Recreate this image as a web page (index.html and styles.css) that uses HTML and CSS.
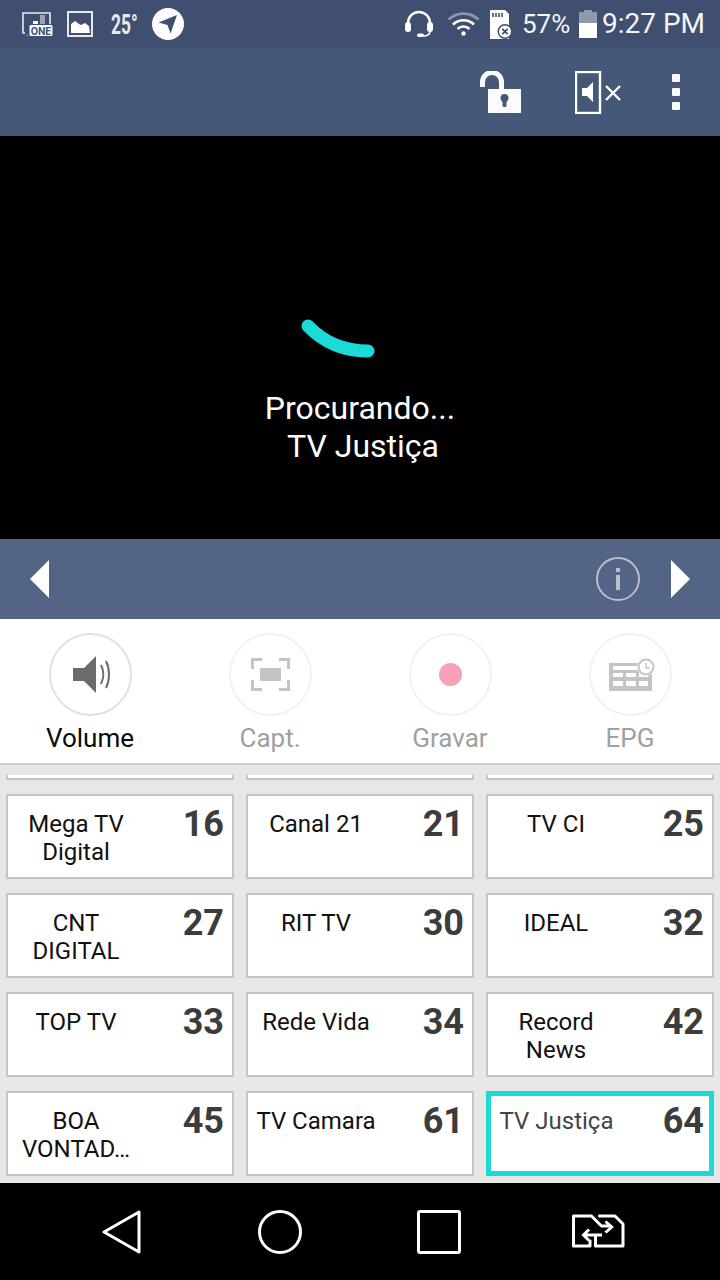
FILE: index.html
```html
<!DOCTYPE html>
<html lang="pt">
<head>
<meta charset="utf-8">
<title>TV</title>
<link rel="stylesheet" href="styles.css">
</head>
<body>
<div class="app">
  <header class="status">
    <div class="status-left">
      <svg class="ic-one" viewBox="0 0 31 24"><path d="M1 19V1h27v11" fill="none" stroke="#e8eaee" stroke-width="1.6"/><rect x="11" y="9" width="5" height="3" fill="#fff"/><rect x="18" y="3" width="5" height="9" fill="#9aa3b5"/><path d="M1 19v2h2M5 24h1" stroke="#e8eaee" stroke-width="1.4" fill="none"/><rect x="7.500" y="13" width="23" height="11" rx="1.500" fill="#fff"/><text x="19" y="22.500" class="one-text">ONE</text></svg>
      <svg class="ic-pic" viewBox="0 0 26 26"><rect x="1" y="1" width="24" height="24" fill="none" stroke="#e6e8ec" stroke-width="2"/><path d="M4 22v-9l4-3 4 3 2 1 4-2 4 3 1 7z" fill="#fff"/></svg>
      <span class="temp">25°</span>
      <svg class="ic-nav" viewBox="0 0 32 32"><circle cx="16" cy="16" r="16" fill="#fff"/><path d="M6.500 14.500 25 7 18.500 25.500 15.500 17z" fill="#404f6f"/></svg>
    </div>
    <div class="status-right">
      <svg class="ic-head" viewBox="0 0 30 28"><path d="M4 15V13a11 11 0 0 1 22 0v2" fill="none" stroke="#fff" stroke-width="2.400"/><rect x="1" y="12" width="6" height="10" rx="3" fill="#fff"/><rect x="23" y="12" width="6" height="10" rx="3" fill="#fff"/><path d="M26 21c0 4-4 5-7 5" fill="none" stroke="#fff" stroke-width="1.600"/><rect x="13" y="23.500" width="7" height="3.500" rx="1.700" fill="#fff"/></svg>
      <svg class="ic-wifi" viewBox="0 0 33 24"><path d="M1.500 7.500a22 22 0 0 1 30 0" fill="none" stroke="#8d97ac" stroke-width="2.600"/><path d="M6 12.500a15 15 0 0 1 21 0M10.500 17a8.500 8.500 0 0 1 12 0" fill="none" stroke="#fff" stroke-width="2.600"/><circle cx="16.500" cy="21.500" r="2.200" fill="#fff"/></svg>
      <svg class="ic-sd" viewBox="0 0 23 29"><path d="M0 0h15l4 4v25H0z" fill="#fff"/><path d="M3 3v4M6 3v4M9 3v4M12 3v4" stroke="#404f6f" stroke-width="1.600"/><circle cx="15" cy="21.500" r="7.500" fill="#404f6f"/><circle cx="15" cy="21.500" r="6" fill="#fff"/><path d="m12.300 18.800 5.400 5.400m0-5.400-5.400 5.400" stroke="#404f6f" stroke-width="1.800"/></svg>
      <span class="pct">57%</span>
      <svg class="ic-batt" viewBox="0 0 18 28"><path d="M5 0h8v2h5v11H0V2h5z" fill="#8f98ac"/><rect y="13" width="18" height="15" fill="#fff"/></svg>
      <span class="clock">9:27 PM</span>
    </div>
  </header>

  <div class="toolbar">
    <svg class="ic-lock" viewBox="0 0 41 42"><path d="M2.500 16V11a9.500 9.500 0 0 1 19 0v7" fill="none" stroke="#fbfbfb" stroke-width="5"/><rect x="8" y="18" width="33" height="24" fill="#fbfbfb"/><circle cx="24.500" cy="27" r="4" fill="#455878"/><rect x="22.500" y="28" width="4" height="8" rx="1.500" fill="#455878"/></svg>
    <svg class="ic-mute" viewBox="0 0 46 43"><rect x="1" y="1" width="24" height="41" fill="none" stroke="#fff" stroke-width="2.400"/><path d="M7 17h5l6-6v20l-6-6H7z" fill="#fff"/><path d="m31 15 14 14m0-14-14 14" stroke="#fff" stroke-width="2.400"/></svg>
    <div class="dots"><i></i><i></i><i></i></div>
  </div>

  <section class="video">
    <svg class="spinner" viewBox="0 0 84 44"><path d="M12 8Q36 33 72 33" fill="none" stroke="#1bdad8" stroke-width="13" stroke-linecap="round"/></svg>
    <p class="searching">Procurando...</p>
    <p class="searching searching-name">TV Justiça</p>
  </section>

  <nav class="channel-nav">
    <svg class="ic-arrow" viewBox="0 0 19 38"><path d="M19 0v38L0 19z" fill="#fff"/></svg>
    <div class="nav-right">
      <svg class="ic-info" viewBox="0 0 44 44"><circle cx="22" cy="22" r="21" fill="none" stroke="#b9c0cc" stroke-width="2"/><rect x="20" y="18" width="4" height="15" fill="#b9c0cc"/><rect x="20" y="11" width="4" height="4" fill="#b9c0cc"/></svg>
      <svg class="ic-arrow" viewBox="0 0 19 38"><path d="M0 0v38l19-19z" fill="#fff"/></svg>
    </div>
  </nav>

  <section class="actions">
    <div class="action">
      <div class="circle circle-on"><svg class="ic-vol" viewBox="0 0 38 38"><path d="M0 12h11L23 0v37L11 25H0z" fill="#6b6b6b"/><path d="M29 9c3 6 3 13 0 19M34 5c4 8 4 19 0 27" transform="translate(-1 0)" fill="none" stroke="#6b6b6b" stroke-width="2"/></svg></div>
      <span class="action-label label-on">Volume</span>
    </div>
    <div class="action">
      <div class="circle"><svg class="ic-capt" viewBox="0 0 39 33"><path d="M1.500 11V1.500H11M28 1.500h9.500V11M1.500 22v9.500H11M28 31.500h9.500V22" fill="none" stroke="#c4c4c4" stroke-width="3"/><rect x="9" y="10" width="21" height="13" fill="#c4c4c4"/></svg></div>
      <span class="action-label">Capt.</span>
    </div>
    <div class="action">
      <div class="circle"><span class="rec-dot"></span></div>
      <span class="action-label">Gravar</span>
    </div>
    <div class="action">
      <div class="circle"><svg class="ic-epg" viewBox="0 0 46 33"><rect y="5" width="43" height="28" fill="#c4c4c4"/><path d="M4 8h26v4H4zM4 15h10v4H4zM17 15h10v4H17zM30 15h9v4h-9zM4 23h10v5H4zM17 23h10v5H17zM30 23h9v5h-9z" fill="#fff"/><circle cx="37" cy="9" r="9" fill="#fff"/><circle cx="37" cy="9" r="7.500" fill="none" stroke="#c4c4c4" stroke-width="2"/><path d="M37 4.500V10h4" fill="none" stroke="#c4c4c4" stroke-width="1.400"/></svg></div>
      <span class="action-label">EPG</span>
    </div>
  </section>

  <main class="grid">
    <div class="tile tile-cut"></div><div class="tile tile-cut"></div><div class="tile tile-cut"></div>
    <div class="tile"><span class="name">Mega TV Digital</span><b class="num">16</b></div>
    <div class="tile"><span class="name">Canal 21</span><b class="num">21</b></div>
    <div class="tile"><span class="name">TV CI</span><b class="num">25</b></div>
    <div class="tile"><span class="name">CNT DIGITAL</span><b class="num">27</b></div>
    <div class="tile"><span class="name">RIT TV</span><b class="num">30</b></div>
    <div class="tile"><span class="name">IDEAL</span><b class="num">32</b></div>
    <div class="tile"><span class="name">TOP TV</span><b class="num">33</b></div>
    <div class="tile"><span class="name">Rede Vida</span><b class="num">34</b></div>
    <div class="tile"><span class="name">Record News</span><b class="num">42</b></div>
    <div class="tile"><span class="name">BOA VONTAD…</span><b class="num">45</b></div>
    <div class="tile"><span class="name">TV Camara</span><b class="num">61</b></div>
    <div class="tile tile-active"><span class="name">TV Justiça</span><b class="num">64</b></div>
  </main>

  <footer class="sysnav">
    <svg class="ic-sys" viewBox="0 0 44 44"><path d="M2 22 37 2v40z" fill="none" stroke="#fff" stroke-width="3" stroke-linejoin="round"/></svg>
    <svg class="ic-sys" viewBox="0 0 44 44"><circle cx="22" cy="22" r="20.500" fill="none" stroke="#fff" stroke-width="3"/></svg>
    <svg class="ic-sys" viewBox="0 0 44 44"><rect x="1.500" y="1.500" width="41" height="41" rx="1.500" fill="none" stroke="#fff" stroke-width="3"/></svg>
    <svg class="ic-switch" viewBox="0 0 54 36"><path d="M19 25.700V32H2.500V2h18l10 10H40" fill="none" stroke="#fff" stroke-width="3" stroke-linejoin="round"/><path d="M34.500 7.500 40.700 13l-6.200 5.500" fill="none" stroke="#fff" stroke-width="3"/><path d="M27.300 2H44l8 8v22H24.500V21" fill="none" stroke="#fff" stroke-width="3" stroke-linejoin="round"/><path d="M18 15.500 12.500 21l5.500 5.500M13 21h18" fill="none" stroke="#fff" stroke-width="3"/></svg>
  </footer>
</div>
</body>
</html>
```
FILE: styles.css
```css
* { box-sizing: border-box; }
html, body { margin: 0; padding: 0; }
body { width: 720px; height: 1280px; overflow: hidden; font-family: Roboto, "Liberation Sans", sans-serif; background: #000; }
svg { display: block; flex: none; }
.app { width: 720px; height: 1280px; display: flex; flex-direction: column; }

.status { height: 48px; background: #404f6f; display: flex; justify-content: space-between; align-items: center; color: #f4f5f7; padding: 0 14px 0 22px; }
.status-left, .status-right { display: flex; align-items: center; }
.ic-one { width: 31px; height: 24px; margin-right: 14px; }
.one-text { font: 700 10.5px Roboto, sans-serif; fill: #404f6f; text-anchor: middle; }
.ic-pic { width: 26px; height: 26px; margin-right: 18px; }
.temp { width: 26px; margin-right: 15px; font: 700 28px Roboto, sans-serif; white-space: nowrap; transform: scaleX(.62); transform-origin: left center; color: #e8eaee; }
.ic-nav { width: 32px; height: 32px; }
.ic-head { width: 30px; height: 28px; margin-right: 13px; }
.ic-wifi { width: 33px; height: 24px; margin-right: 10px; }
.ic-sd { width: 23px; height: 29px; margin-right: 9px; }
.pct { font-size: 26px; width: 48px; margin-right: 9px; line-height: 48px; }
.ic-batt { width: 18px; height: 28px; margin-right: 5px; }
.clock { font-size: 28px; width: 104px; line-height: 48px; white-space: nowrap; }

.toolbar { height: 88px; background: #455878; display: flex; align-items: center; padding: 0 40px 0 480px; }
.ic-lock { width: 41px; height: 42px; margin-right: 54px; }
.ic-mute { width: 46px; height: 43px; margin-right: 51px; }
.dots { display: flex; flex-direction: column; gap: 6px; }
.dots i { display: block; width: 8px; height: 8px; border-radius: 1px; background: #fbfbfb; }

.video { height: 403px; background: #000; display: flex; flex-direction: column; align-items: center; padding-top: 182px; color: #fff; }
.spinner { width: 84px; height: 44px; margin: 0 0 27px -44px; }
.searching { margin: 0; font-size: 32px; line-height: 38px; white-space: nowrap; }
.searching-name { padding-left: 6px; }

.channel-nav { height: 80px; background: #536484; display: flex; justify-content: space-between; align-items: center; padding: 0 30px; }
.ic-arrow { width: 19px; height: 38px; }
.nav-right { display: flex; align-items: center; gap: 31px; }
.ic-info { width: 44px; height: 44px; }

.actions { height: 146px; background: #fff; border-bottom: 2px solid #cfcfcd; display: grid; grid-template-columns: repeat(4, 180px); padding-top: 14px; }
.action { display: flex; flex-direction: column; align-items: center; }
.circle { width: 83px; height: 83px; border: 2px solid #f1f1f1; border-radius: 50%; display: flex; align-items: center; justify-content: center; }
.circle-on { border-color: #dfe1e0; }
.ic-vol { width: 38px; height: 38px; margin-left: 3px; }
.ic-capt { width: 39px; height: 33px; }
.rec-dot { width: 23px; height: 23px; border-radius: 50%; background: #f5a1b6; }
.ic-epg { width: 46px; height: 33px; margin-left: 4px; }
.action-label { margin-top: 6px; font-size: 26px; line-height: 32px; color: #a0a0a0; }
.label-on { color: #0a0a0a; }

.grid { height: 418px; background: #e8e7e5; display: grid; grid-template-columns: repeat(3, 228px); grid-auto-rows: 85px; grid-template-rows: 5px; column-gap: 12px; row-gap: 14px; padding: 10px 0 0 6px; overflow: hidden; }
.tile { background: #fff; border: 2px solid #c4c4c2; display: flex; align-items: flex-start; padding: 13px 8px 0 0; }
.tile-cut { border-top: 0; padding: 0; }
.name { width: 136px; flex: none; text-align: center; font-size: 24px; line-height: 28px; color: #111; padding: 1px 6px 0; }
.num { flex: 1; text-align: right; font-size: 36px; font-weight: 700; line-height: 30px; color: #3c3c3c; }
.tile-active { border: 5px solid #1bdad8; padding: 10px 5px 0 0; }
.tile-active .name { width: 131px; color: #444; padding: 1px 4px 0; }

.sysnav { height: 97px; background: #000; display: flex; align-items: center; padding: 0 95px 0 102px; }
.ic-sys { width: 44px; height: 44px; margin-right: 112px; }
.ic-sys:nth-child(2) { margin-right: 115px; }
.ic-sys:nth-child(3) { margin-right: 110px; }
.ic-switch { width: 54px; height: 36px; }
```
